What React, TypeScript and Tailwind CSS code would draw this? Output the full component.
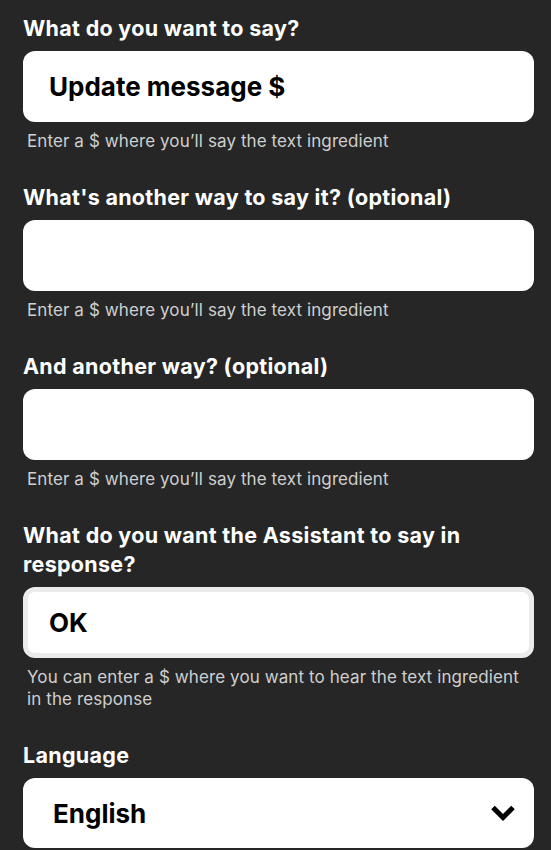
import React from "react";

const font = { fontFamily: "Inter, 'Noto Sans', sans-serif" };

function Label({ children }: { children: React.ReactNode }) {
  return <div className="text-[21.5px] leading-[29px] font-bold text-white tracking-[0.3px]">{children}</div>;
}

function Helper({ children }: { children: React.ReactNode }) {
  return <div className="mt-2 pl-1 text-[17px] leading-[22px] text-[#cfcfcf] tracking-[0.1px]">{children}</div>;
}

function Section({ label, value, helper, bordered }: { label: React.ReactNode; value?: string; helper: React.ReactNode; bordered?: boolean }) {
  return (
    <div className="mb-[31px]">
      <Label>{label}</Label>
      <div
        className={
          bordered
            ? "mt-2 h-[71px] rounded-[12px] bg-white flex items-center pl-[21px] text-[26px] font-bold text-black border-[5px] border-[#ebebeb]"
            : "mt-2 h-[71px] rounded-[12px] bg-white flex items-center pl-[26px] text-[26px] font-bold text-black"
        }
      >
        {value}
      </div>
      <Helper>{helper}</Helper>
    </div>
  );
}

export default function App() {
  return (
    <div className="w-[551px] h-[850px] bg-[#262626] pl-[23px] pr-[17px] pt-[14px] overflow-hidden" style={font}>
      <Section label="What do you want to say?" value="Update message $" helper="Enter a $ where you’ll say the text ingredient" />
      <Section label="What's another way to say it? (optional)" helper="Enter a $ where you’ll say the text ingredient" />
      <Section label="And another way? (optional)" helper="Enter a $ where you’ll say the text ingredient" />
      <Section
        label={<>What do you want the Assistant to say in<br />response?</>}
        value="OK"
        bordered
        helper={<>You can enter a $ where you want to hear the text ingredient<br />in the response</>}
      />
      <div>
        <Label>Language</Label>
        <div className="mt-2 h-[70px] rounded-[12px] bg-white flex items-center justify-between pl-[30px] pr-[18px] text-[26px] font-bold text-black">
          <span>English</span>
          <svg width="26" height="19" viewBox="0 0 26 19" fill="none">
            <path d="M3 3.5 L13 13.5 L23 3.5" stroke="#000" strokeWidth="5" strokeLinecap="butt" strokeLinejoin="miter" />
          </svg>
        </div>
      </div>
    </div>
  );
}
